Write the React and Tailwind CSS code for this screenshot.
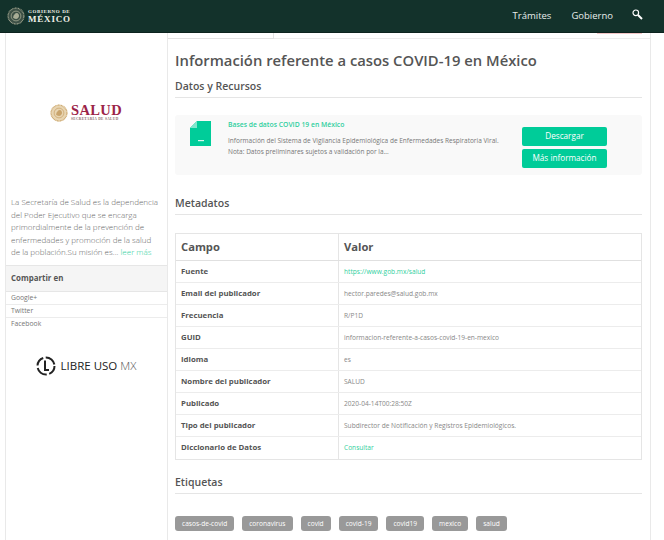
const ROWS = [
  { label: 'Fuente', value: 'https://www.gob.mx/salud', link: true },
  { label: 'Email del publicador', value: 'hector.paredes@salud.gob.mx' },
  { label: 'Frecuencia', value: 'R/P1D' },
  { label: 'GUID', value: 'informacion-referente-a-casos-covid-19-en-mexico' },
  { label: 'Idioma', value: 'es' },
  { label: 'Nombre del publicador', value: 'SALUD' },
  { label: 'Publicado', value: '2020-04-14T00:28:50Z' },
  { label: 'Tipo del publicador', value: 'Subdirector de Notificación y Registros Epidemiológicos.' },
  { label: 'Diccionario de Datos', value: 'Consultar', link: true },
]

const TAGS = ['casos-de-covid', 'coronavirus', 'covid', 'covid-19', 'covid19', 'mexico', 'salud']

const SHARE = ['Google+', 'Twitter', 'Facebook']

function Emblem({ size, ring, fill }) {
  return (
    <svg width={size} height={size} viewBox="0 0 24 24" className="shrink-0">
      <circle cx="12" cy="12" r="11.5" fill={fill} />
      <circle cx="12" cy="12" r="10.5" fill="none" stroke={ring} strokeWidth="1.6" strokeDasharray="1 1" />
      <circle cx="12" cy="12" r="6.5" fill="none" stroke={ring} strokeWidth="1" />
      <path d="M8 14c1-4 3-6 5-6s3 2 3 4-2 4-4 4-3-1-4-2z" fill={ring} />
    </svg>
  )
}

function SectionTitle({ children, className = '' }) {
  return (
    <h2 className={`text-[10.5px] leading-[16px] font-semibold text-[#555] border-b border-[#e5e5e5] pb-[3px] ${className}`}>
      {children}
    </h2>
  )
}

export default function App() {
  return (
    <div className="w-[664px] h-[540px] overflow-hidden bg-white font-['Open_Sans',sans-serif]">
      {/* Topbar */}
      <header className="h-[33px] bg-[#13322b] border-b border-[#0c231e] flex items-center justify-between pl-[7px] pr-[21px]">
        <div className="flex items-center gap-[2px]">
          <Emblem size={18} ring="#a9ad96" fill="#3d5046" />
          <div className="font-['Liberation_Serif',serif] font-bold text-[#f0f0e8] ml-[1px]">
            <div className="text-[5px] leading-[6px] tracking-[0.6px]">GOBIERNO DE</div>
            <div className="text-[9px] leading-[9px] tracking-[0.8px]">MÉXICO</div>
          </div>
        </div>
        <nav className="flex items-center text-[9.5px] text-[#e8edeb]">
          <span>Trámites</span>
          <span className="ml-[20px]">Gobierno</span>
          <svg width="11" height="11" viewBox="0 0 11 11" className="ml-[19px] -mt-[3px]">
            <circle cx="3.8" cy="3.8" r="2.8" fill="none" stroke="#fff" strokeWidth="1.2" />
            <path d="M6 6l4 4" stroke="#fff" strokeWidth="2" />
          </svg>
        </nav>
      </header>

      <div className="flex pl-[5px] h-[507px]">
        {/* Sidebar */}
        <aside className="w-[163px] shrink-0 border-x border-[#e9e9e9]">
          <div className="h-[70px]" />
          <div className="flex items-center justify-center gap-[3px] h-[20px] pr-[1px]">
            <Emblem size={18} ring="#c9a46c" fill="#e8d5b2" />
            <div className="font-['Liberation_Serif',serif] text-[#9c2348]">
              <div className="text-[14.5px] leading-[13px] font-bold tracking-[0.4px]">SALUD</div>
              <div className="text-[3.5px] leading-[5px] font-bold tracking-[0.35px] text-[#8a6a6a]">SECRETARÍA DE SALUD</div>
            </div>
          </div>
          <p className="mt-[73px] px-[5px] text-[8px] leading-[12.5px] font-light text-[#666] whitespace-nowrap">
            La Secretaría de Salud es la dependencia<br />
            del Poder Ejecutivo que se encarga<br />
            primordialmente de la prevención de<br />
            enfermedades y promoción de la salud<br />
            de la población.Su misión es... <span className="text-[#2fcf9e]">leer más</span>
          </p>
          <div className="mt-[6.5px] h-[27px] bg-[#f5f5f5] border-y border-[#e6e6e6] px-[5px] flex items-center text-[7.9px] font-bold text-[#555]">
            Compartir en
          </div>
          {SHARE.map((name, i) => (
            <div key={name} className={`h-[13px] px-[5px] text-[6.8px] leading-[12px] text-[#777] ${i < SHARE.length - 1 ? 'border-b border-[#ececec]' : ''}`}>
              {name}
            </div>
          ))}
          <div className="mt-[25px] flex items-center justify-center gap-[5px] pr-[1px]">
            <svg width="20" height="20" viewBox="0 0 20 20" className="shrink-0">
              <circle cx="10" cy="10" r="8.5" fill="none" stroke="#222" strokeWidth="2" strokeDasharray="10 2.5 12 2.5" />
              <path d="M9 4.5v9.5h4" fill="none" stroke="#222" strokeWidth="2" />
            </svg>
            <span className="text-[11.5px] leading-[14px] text-[#222]">LIBRE USO <span className="text-[#555] font-light">MX</span></span>
          </div>
        </aside>

        {/* Content */}
        <main className="w-[483px] shrink-0 border-r border-[#e9e9e9]">
          <div className="relative h-[6px] border-b border-[#ececec]">
            <div className="absolute left-0 top-0 h-[6px] w-[106px] border-r border-b border-[#e2e2e2]" />
            <div className="absolute left-[429px] top-0 h-px w-[45px] bg-[#f3c6c6]" />
          </div>
          <div className="pl-[7px] pr-[8px]">
            <h1 className="mt-[10px] text-[14.8px] leading-[22px] font-semibold text-[#555] whitespace-nowrap">
              Información referente a casos COVID-19 en México
            </h1>
            <SectionTitle className="mt-[7px]">Datos y Recursos</SectionTitle>

            {/* Resource card */}
            <div className="mt-[17px] h-[60px] bg-[#f9f9f9] rounded-[3px] flex">
              <div className="w-[53px] shrink-0 pt-[6px] pl-[15px]">
                <svg width="21" height="25" viewBox="0 0 21 25">
                  <path d="M7 0h14v25H0V7z" fill="#00cc99" />
                  <path d="M7 0v7H0z" fill="#7fe6cc" />
                  <rect x="8" y="19" width="6" height="1.2" fill="#d8f7ee" />
                </svg>
              </div>
              <div className="w-[294px] shrink-0 pt-[5px]">
                <div className="text-[6.8px] leading-[10px] font-semibold text-[#2fcf9e] whitespace-nowrap">Bases de datos COVID 19 en México</div>
                <p className="mt-[5px] text-[6.5px] leading-[11px] text-[#777] whitespace-nowrap">
                  Información del Sistema de Vigilancia Epidemiológica de Enfermedades Respiratoria Viral.<br />
                  Nota: Datos preliminares sujetos a validación por la...
                </p>
              </div>
              <div className="pt-[12px] flex flex-col gap-[3px]">
                <button className="w-[85px] h-[19px] rounded-[2px] bg-[#00cc99] text-white text-[8.2px]">Descargar</button>
                <button className="w-[85px] h-[19px] rounded-[2px] bg-[#00cc99] text-white text-[8.2px]">Más información</button>
              </div>
            </div>

            <SectionTitle className="mt-[20px]">Metadatos</SectionTitle>

            {/* Metadata table */}
            <div className="mt-[18px] border border-[#e5e5e5] text-[#555]">
              <div className="flex h-[27px] border-b border-[#e0e0e0] text-[11.2px] font-bold">
                <div className="w-[163px] shrink-0 border-r border-[#e5e5e5] px-[5px] flex items-center">Campo</div>
                <div className="px-[5px] flex items-center">Valor</div>
              </div>
              {ROWS.map(row => (
                <div key={row.label} className="flex h-[22px] border-b border-[#ececec] last:border-b-0">
                  <div className="w-[163px] shrink-0 border-r border-[#e5e5e5] px-[5px] flex items-center text-[7.8px] font-bold">{row.label}</div>
                  <div className={`px-[5px] flex items-center text-[6.6px] whitespace-nowrap ${row.link ? 'text-[#2fcf9e]' : 'text-[#888]'}`}>{row.value}</div>
                </div>
              ))}
            </div>

            <SectionTitle className="mt-[14px]">Etiquetas</SectionTitle>

            <div className="mt-[22px] flex gap-[8px]">
              {TAGS.map(tag => (
                <span key={tag} className="h-[15px] px-[7px] rounded-[3px] bg-[#999] text-white text-[6.6px] leading-[15px]">{tag}</span>
              ))}
            </div>
          </div>
        </main>
      </div>
    </div>
  )
}
